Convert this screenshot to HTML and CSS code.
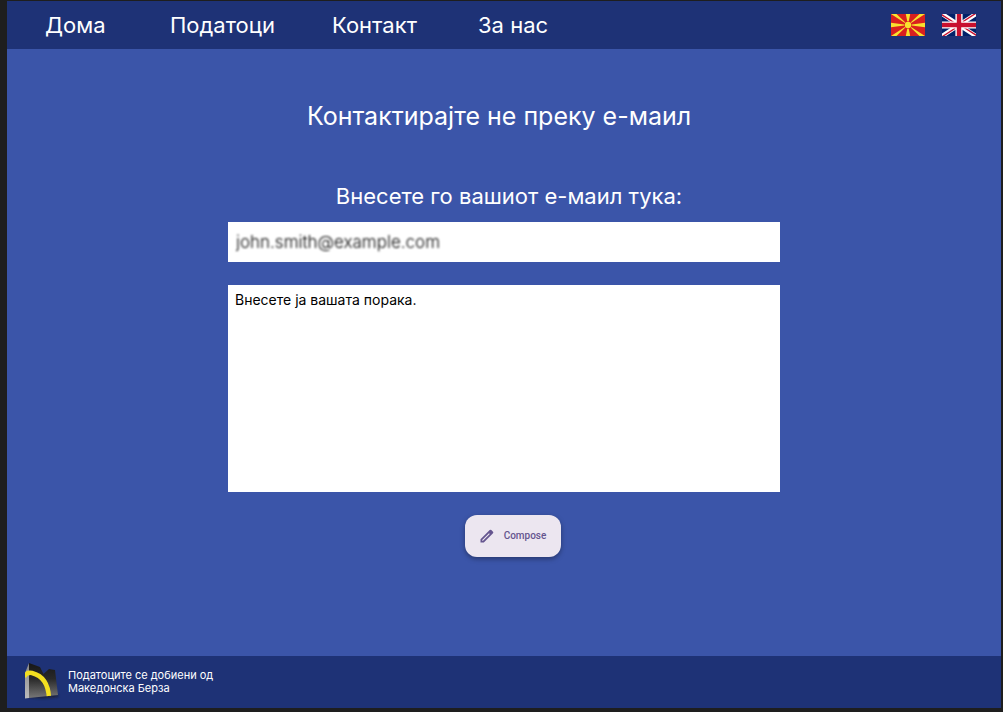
FILE: index.html
```html
<!DOCTYPE html>
<html lang="mk">
<head>
<meta charset="utf-8">
<meta name="viewport" content="width=device-width, initial-scale=1">
<title>Контакт</title>
<link rel="stylesheet" href="styles.css">
</head>
<body>
<div class="page">
  <header class="header">
    <nav class="nav">
      <a href="#home">Дома</a>
      <a href="#data">Податоци</a>
      <a href="#contact">Контакт</a>
      <a href="#about">За нас</a>
    </nav>
    <div class="languages">
      <a href="#mk" aria-label="Македонски">
        <svg class="flag" viewBox="0 0 34 22" preserveAspectRatio="none">
          <rect width="34" height="22" fill="#d9201f"/>
          <g fill="#f8e22e">
            <path d="M0 0h5.500L17 11zM34 0h-5.500L17 11zM0 22h5.500L17 11zM34 22h-5.500L17 11z"/>
            <path d="M14.800 0h4.400L17 11zM14.800 22h4.400L17 11zM0 8.800v4.400L17 11zM34 8.800v4.400L17 11z"/>
          </g>
          <circle cx="17" cy="11" r="3.700" fill="#d9201f"/>
          <circle cx="17" cy="11" r="3.200" fill="#f8e22e"/>
        </svg>
      </a>
      <a href="#en" aria-label="English">
        <svg class="flag" viewBox="0 0 34 22" preserveAspectRatio="none">
          <rect width="34" height="22" fill="#012169"/>
          <path d="M0 0l34 22M34 0L0 22" stroke="#fff" stroke-width="4.4"/>
          <path d="M0 0L17 11H14.700L0 1.700zM34 22L17 11h2.300L34 20.300zM34 0L17 11h-2.300L31.500 0zM0 22L17 11h2.300L2.500 22z" fill="#c8102e"/>
          <path d="M17 0v22M0 11h34" stroke="#fff" stroke-width="7.2"/>
          <path d="M17 0v22M0 11h34" stroke="#c8102e" stroke-width="4.4"/>
        </svg>
      </a>
    </div>
  </header>

  <main class="main">
    <h1 class="title">Контактирајте не преку е-маил</h1>
    <form class="form">
      <label class="label" for="email">Внесете го вашиот е-маил тука:</label>
      <div class="email-box"><input class="email" id="email" type="email" value="john.smith@example.com"></div>
      <textarea class="message" aria-label="Порака">Внесете ја вашата порака.</textarea>
      <div class="actions">
        <button class="compose" type="button">
          <svg class="pencil" viewBox="0 0 14 14" aria-hidden="true">
            <path fill="#65558f" fill-rule="evenodd" d="M.5 13.500V10.200L9.700 1Q10.500.3 11.300 1L13 2.700Q13.700 3.500 13 4.300L3.800 13.500ZM2.200 11.800H3L9.800 5 9 4.200 2.200 11Z"/>
          </svg>
          Compose
        </button>
      </div>
    </form>
  </main>

  <footer class="footer">
    <svg class="logo" viewBox="0 0 38 40" aria-hidden="true">
      <defs>
        <linearGradient id="face" x1="0" y1="0" x2="0" y2="1">
          <stop offset="0" stop-color="#171717"/>
          <stop offset=".45" stop-color="#292929"/>
          <stop offset="1" stop-color="#777"/>
        </linearGradient>
        <linearGradient id="side" x1="0" y1="0" x2="0" y2="1">
          <stop offset="0" stop-color="#888"/>
          <stop offset="1" stop-color="#bbb"/>
        </linearGradient>
        <clipPath id="shape"><path d="M6 1l11 4 3.500 7L26 7l6 1 3 25-28 3-5 1V11z"/></clipPath>
        <filter id="soft" x="-20%" y="-100%" width="140%" height="300%"><feGaussianBlur stdDeviation="1.200"/></filter>
      </defs>
      <ellipse cx="19" cy="34" rx="17" ry="2.500" fill="#1b2340" filter="url(#soft)"/>
      <path d="M6 1l11 4 3.500 7L26 7l6 1 3 25-29 3z" fill="url(#face)"/>
      <path d="M6 1L2 11v25.500l4-.5z" fill="url(#side)"/>
      <path d="M1 15Q3 10 9 11 25 15 26 36" fill="none" stroke="#f3df20" stroke-width="4.500" clip-path="url(#shape)"/>
    </svg>
    <p class="credit">Податоците се добиени од<br>Македонска Берза</p>
  </footer>
</div>
</body>
</html>
```
FILE: styles.css
```css
* {
  box-sizing: border-box;
}

body {
  margin: 0;
  background: #1e1e1e;
  color: #fff;
  font-family: Inter, "Liberation Sans", sans-serif;
}

.page {
  display: flex;
  flex-direction: column;
  min-height: 100vh;
  padding: 1px 2px 4px 7px;
}

.header {
  display: flex;
  align-items: center;
  justify-content: space-between;
  height: 48px;
  padding: 0 25px 0 38px;
  background: #1e3276;
}

.nav {
  display: grid;
  grid-template-columns: 125px 162px 146px auto;
  font-size: 22px;
  line-height: 28px;
}

.nav a {
  color: inherit;
  text-decoration: none;
}

.languages {
  display: flex;
  gap: 17px;
}

.flag {
  display: block;
  width: 34px;
  height: 22px;
}

.main {
  flex: 1;
  padding: 51px 24px;
  background: #3b55a9;
}

.title {
  margin: 0 0 48px;
  padding-right: 10px;
  font-size: 25px;
  font-weight: 400;
  line-height: 32px;
  text-align: center;
}

.form {
  display: flex;
  flex-direction: column;
  max-width: 552px;
  margin: 0 auto;
}

.label {
  margin-bottom: 10px;
  padding-left: 10px;
  font-size: 22px;
  line-height: 32px;
  text-align: center;
}

.email-box {
  display: flex;
  height: 40px;
  margin-bottom: 23px;
  background: #fff;
}

.email {
  flex: 1;
  min-width: 0;
  padding: 0 8px;
  border: 0;
  background: transparent;
  color: #000;
  font: 300 17px Inter, sans-serif;
  filter: blur(1px);
}

.message {
  height: 207px;
  padding: 6px 7px;
  border: 0;
  border-radius: 0;
  resize: none;
  background: #fff;
  color: #000;
  font: 14px/18px Inter, sans-serif;
}

.actions {
  display: flex;
  justify-content: center;
  padding: 23px 0 0 18px;
}

.compose {
  display: flex;
  align-items: center;
  gap: 10px;
  height: 42px;
  padding: 0 15px;
  border: 0;
  border-radius: 12px;
  background: #ece6f0;
  color: #65558f;
  font: 500 10px/16px Roboto, sans-serif;
  box-shadow: 0 2px 5px rgba(0, 0, 0, 0.35);
}

.pencil {
  width: 14px;
  height: 14px;
}

.footer {
  display: flex;
  align-items: center;
  gap: 7px;
  height: 52px;
  padding: 0 16px;
  background: #1e3276;
}

.logo {
  width: 38px;
  height: 40px;
}

.credit {
  margin: 0;
  font-size: 11px;
  line-height: 13px;
}
```
